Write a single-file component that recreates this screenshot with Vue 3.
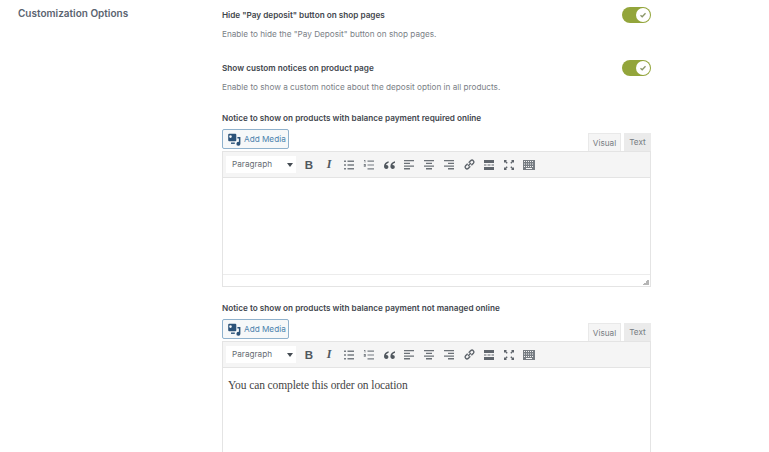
<template>
  <div class="page">
    <div class="section-title">Customization Options</div>
    <div class="fields">
      <div v-for="opt in options" :key="opt.title" class="option">
        <div class="option__text">
          <div class="label">{{ opt.title }}</div>
          <div class="desc">{{ opt.desc }}</div>
        </div>
        <span class="toggle">
          <span class="toggle__knob">
            <svg width="8" height="8" viewBox="0 0 8 8" fill="none"><path d="M1.5 4.2 3.2 5.8 6.5 2.2" stroke="#8a9668" stroke-width="1.3"/></svg>
          </span>
        </span>
      </div>

      <div v-for="ed in editors" :key="ed.label" class="editor-block">
        <div class="label">{{ ed.label }}</div>
        <div class="editor-head">
          <button class="media-btn">
            <svg width="13" height="13" viewBox="0 0 13 13" fill="#2b5278">
              <path d="M1.2 .8h6.1a1 1 0 0 1 1 1v5.400a1 1 0 0 1-1 1H1.200a1 1 0 0 1-1-1V1.800a1 1 0 0 1 1-1Zm1.300 1.500a1.300 1.300 0 1 0 0 2.600 1.300 1.300 0 0 0 0-2.600Z" fill-rule="evenodd"/>
              <path d="M9.400 4h3v6.800a2 2 0 1 1-1.500-1.900V5.400H9.400Z"/>
              <path d="M3 9.500h3.800v1.400H3z"/>
            </svg>
            <span>Add Media</span>
          </button>
          <div class="tabs">
            <span class="tab tab--active">Visual</span>
            <span class="tab">Text</span>
          </div>
        </div>
        <div class="editor">
          <div class="toolbar">
            <span class="select">Paragraph<i class="select__arrow"></i></span>
            <span class="tool tool--b">B</span>
            <span class="tool tool--i">I</span>
            <span class="tool"><svg width="12" height="12" viewBox="0 0 12 12" fill="#777d83"><path d="M1 1.500h2v1.400H1zM4.500 1.500H11v1.400H4.500zM1 5.300h2v1.400H1zM4.500 5.300H11v1.400H4.500zM1 9.100h2v1.400H1zM4.500 9.100H11v1.400H4.500z"/></svg></span>
            <span class="tool"><svg width="12" height="12" viewBox="0 0 12 12" fill="#777d83"><path d="M1 1h1.400v2.400H1.600V2H1zM4.500 1.500H11v1.200H4.500zM4.500 5.400H11v1.200H4.500zM4.500 9.300H11v1.200H4.500zM.8 5h2v2.800h-2v-.7h1.200v-.4H.8z"/></svg></span>
            <span class="tool"><svg width="13" height="12" viewBox="0 0 13 12" fill="#50575e"><path d="M5.600 2.200C3 3 1 4.600 1 7.200 1 8.900 2 10 3.300 10c1.200 0 2.100-.9 2.100-2s-.8-1.900-1.900-1.900c-.2 0-.4 0-.6.1.2-1 1.300-1.900 2.700-2.500zM12 2.200C9.400 3 7.400 4.600 7.400 7.200c0 1.700 1 2.800 2.300 2.800 1.200 0 2.100-.9 2.100-2s-.8-1.900-1.900-1.900c-.2 0-.4 0-.6.1.2-1 1.300-1.900 2.700-2.500z"/></svg></span>
            <span class="tool"><svg width="12" height="12" viewBox="0 0 12 12" fill="#6b7177"><path d="M1 1h10v1.300H1zM1 3.700h6v1.300H1zM1 6.400h10v1.300H1zM1 9.100h6v1.300H1z"/></svg></span>
            <span class="tool"><svg width="12" height="12" viewBox="0 0 12 12" fill="#6b7177"><path d="M1 1h10v1.300H1zM3 3.700h6v1.300H3zM1 6.400h10v1.300H1zM3 9.100h6v1.300H3z"/></svg></span>
            <span class="tool"><svg width="12" height="12" viewBox="0 0 12 12" fill="#6b7177"><path d="M1 1h10v1.300H1zM5 3.700h6v1.300H5zM1 6.400h10v1.300H1zM5 9.100h6v1.300H5z"/></svg></span>
            <span class="tool"><svg width="13" height="13" viewBox="0 0 12 12" fill="none" stroke="#5f656c" stroke-width="1.300"><path d="M4.700 7.300 7.300 4.700M4.300 5.300 2.400 7.200a1.700 1.700 0 0 0 2.400 2.400l1.900-1.900M5.300 4.300l1.900-1.900a1.700 1.700 0 0 1 2.400 2.400L7.700 6.700"/></svg></span>
            <span class="tool"><svg width="12" height="12" viewBox="0 0 12 12" fill="#5f656c"><path d="M1 1h10v3H1zM1 8h10v3H1zM1 5.400h2.500v1.200H1zM4.500 5.400h3v1.200h-3zM8.500 5.400H11v1.200H8.500z"/></svg></span>
            <span class="tool"><svg width="12" height="12" viewBox="0 0 12 12" fill="#5f656c"><path d="M1 1h3L3 2l1.700 1.700-1 1L2 3 1 4zM11 1v3l-1-1-1.700 1.700-1-1L9 2 8 1zM1 11V8l1 1 1.700-1.700 1 1L3 10l1 1zM11 11H8l1-1-1.700-1.700 1-1L10 9l1-1z"/></svg></span>
            <span class="tool"><svg width="12" height="12" viewBox="0 0 12 12" fill="#777d83"><path d="M0 1h12v10H0zm1 1v1h1V2zm2 0v1h1V2zm2 0v1h1V2zm2 0v1h1V2zm2 0v1h1V2zM1 4.500v1h1v-1zm2 0v1h1v-1zm2 0v1h1v-1zm2 0v1h1v-1zm2 0v1h1v-1zM1 7v1h1V7zm2 0v1h1V7zm2 0v1h1V7zm2 0v1h1V7zm2 0v1h1V7zM3 9v1h6V9z" fill-rule="evenodd"/></svg></span>
          </div>
          <div class="content" :class="{ 'content--clip': ed.text }">{{ ed.text }}</div>
          <div v-if="!ed.text" class="statusbar"><i class="resize"></i></div>
        </div>
      </div>
    </div>
  </div>
</template>

<script setup>
const options = [
  { title: 'Hide "Pay deposit" button on shop pages', desc: 'Enable to hide the "Pay Deposit" button on shop pages.' },
  { title: 'Show custom notices on product page', desc: 'Enable to show a custom notice about the deposit option in all products.' }
]

const editors = [
  { label: 'Notice to show on products with balance payment required online', text: '' },
  { label: 'Notice to show on products with balance payment not managed online', text: 'You can complete this order on location' }
]
</script>

<style>
html, body {
  margin: 0;
  background: #fff;
  overflow: hidden;
}
</style>

<style scoped>
.page {
  display: flex;
  width: 769px;
  height: 452px;
  overflow: hidden;
  font-family: Inter, "Liberation Sans", sans-serif;
  color: #3c434a;
  box-sizing: border-box;
  padding-left: 18px;
}

.section-title {
  width: 204px;
  flex-shrink: 0;
  padding-top: 6px;
  font-size: 10px;
  line-height: 15px;
  font-weight: 600;
  color: #5a636f;
}

.fields {
  width: 429px;
}

.option {
  display: flex;
  justify-content: space-between;
  align-items: flex-start;
  height: 52.5px;
  padding-top: 9px;
  box-sizing: border-box;
}

.label {
  font-size: 8.2px;
  line-height: 12px;
  font-weight: 600;
  color: #3f464d;
}

.desc {
  margin-top: 7px;
  font-size: 8.2px;
  line-height: 12px;
  color: #7b8187;
}

.toggle {
  display: flex;
  align-items: center;
  justify-content: flex-end;
  width: 29px;
  height: 16px;
  margin-top: -2px;
  border-radius: 8px;
  background: #93a53b;
  padding-right: 1px;
  box-sizing: border-box;
}

.toggle__knob {
  display: flex;
  align-items: center;
  justify-content: center;
  width: 14px;
  height: 14px;
  border-radius: 50%;
  background: #fff;
}

.editor-block {
  padding-top: 7px;
  margin-bottom: 8px;
}

.editor-head {
  display: flex;
  justify-content: space-between;
  align-items: flex-end;
  margin-top: 5px;
}

.media-btn {
  display: flex;
  align-items: center;
  gap: 3px;
  width: 67px;
  height: 20px;
  padding: 0 0 0 5px;
  margin-bottom: 2px;
  border: 1px solid #8fb1cc;
  border-radius: 2px;
  background: #f6f8f9;
  color: #4a82ad;
  font-family: inherit;
  font-size: 8.2px;
  white-space: nowrap;
  box-sizing: border-box;
}

.tabs {
  display: flex;
  gap: 3px;
}

.tab {
  display: flex;
  align-items: center;
  justify-content: center;
  width: 27px;
  height: 18px;
  background: #ebebeb;
  color: #777d83;
  font-size: 8.2px;
  box-sizing: border-box;
}

.tab--active {
  width: 33px;
  background: #f5f5f5;
  border: 1px solid #e9e9e9;
  border-bottom: 0;
}

.editor {
  border: 1px solid #e4e4e4;
  background: #fff;
}

.toolbar {
  display: flex;
  align-items: center;
  height: 25px;
  padding-left: 3px;
  background: #f5f5f5;
  border-bottom: 1px solid #e4e4e4;
}

.select {
  position: relative;
  width: 70px;
  height: 17px;
  padding-left: 6px;
  margin-right: 3px;
  background: #fff;
  font-size: 8.2px;
  line-height: 17px;
  color: #666c73;
  box-sizing: border-box;
}

.select__arrow {
  position: absolute;
  right: 3px;
  top: 7px;
  border-left: 3px solid transparent;
  border-right: 3px solid transparent;
  border-top: 4px solid #444b52;
}

.tool {
  display: flex;
  align-items: center;
  justify-content: center;
  width: 20px;
  height: 20px;
  font-family: "Liberation Serif", serif;
  color: #50575e;
}

.tool--b {
  font-family: "Liberation Sans", sans-serif;
  font-weight: 700;
  font-size: 11.5px;
}

.tool--i {
  font-style: italic;
  font-weight: 700;
  font-size: 12px;
}

.content {
  height: 96px;
  padding: 9px 5px;
  font-family: "Liberation Serif", serif;
  font-size: 11.5px;
  letter-spacing: -0.1px;
  line-height: 17px;
  color: #444;
  box-sizing: border-box;
}

.content--clip {
  height: 200px;
}

.statusbar {
  position: relative;
  height: 11px;
  border-top: 1px solid #ececec;
}

.resize {
  position: absolute;
  right: 1px;
  bottom: 1px;
  width: 6px;
  height: 6px;
  background: linear-gradient(135deg, transparent 50%, #b5b5b5 50%);
}
</style>
